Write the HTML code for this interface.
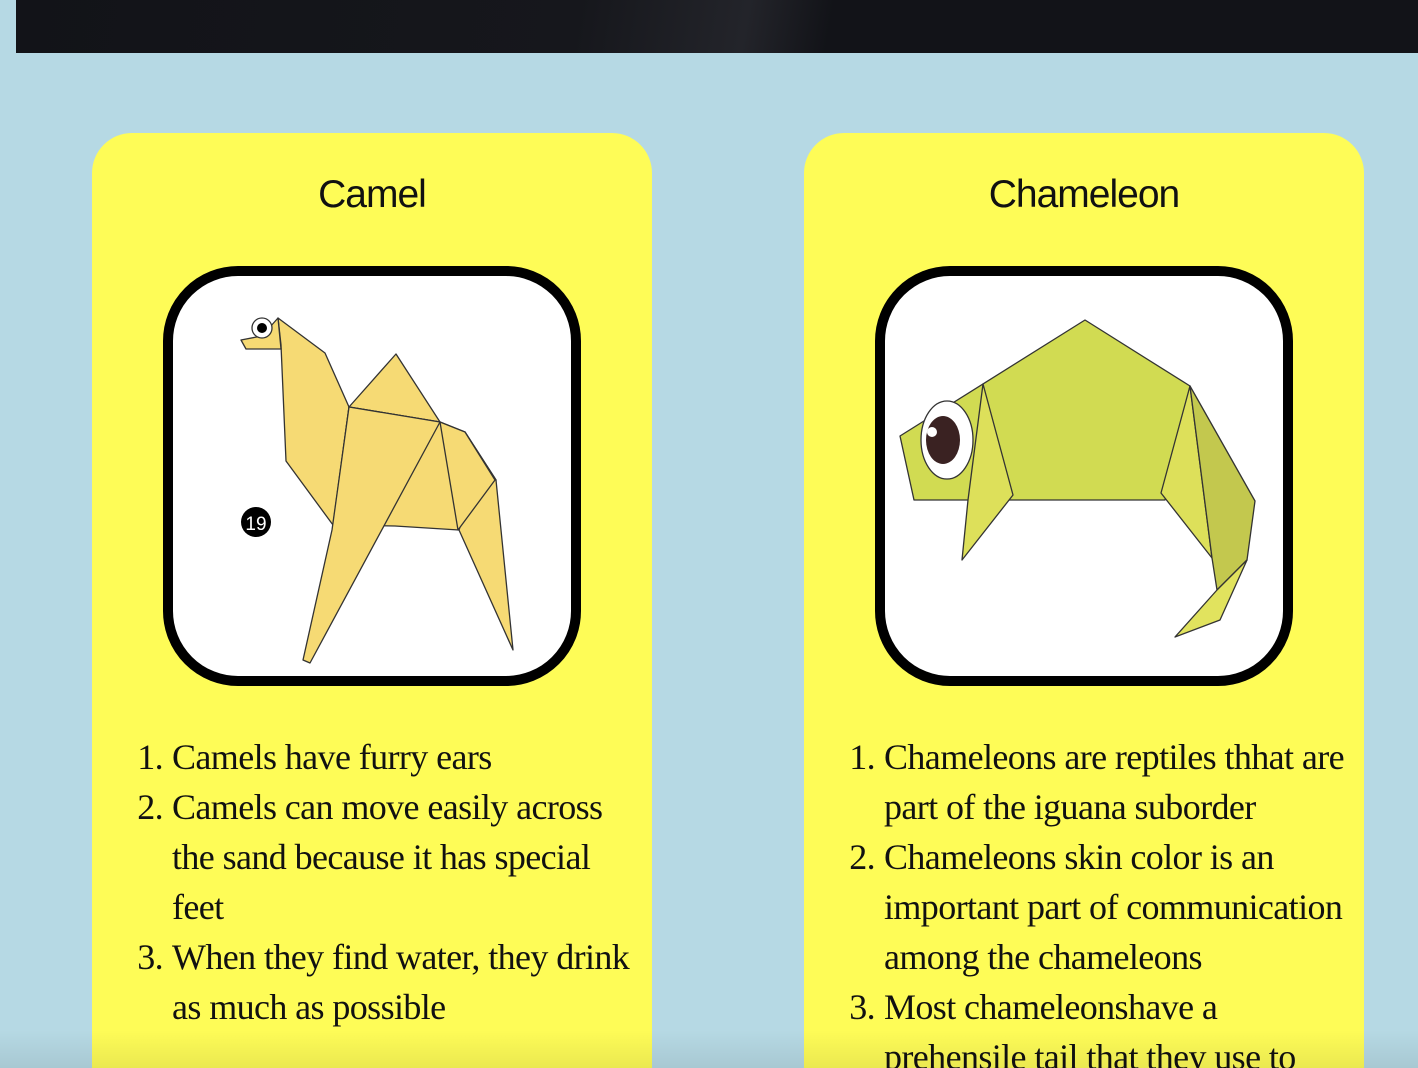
<!DOCTYPE html>
<html style="height:1068px;overflow:hidden"><head><meta charset="utf-8"><style>
html,body{margin:0;padding:0}
body{width:1418px;height:1068px;overflow:hidden;background:#b6d9e4;position:relative;font-family:"Liberation Sans",sans-serif}
.bar{position:absolute;left:16px;top:0;width:1402px;height:53px;background:linear-gradient(100deg,#121318 0%,#16171c 40%,#23242a 52%,#121318 58%,#121318 100%)}
.card{position:absolute;top:133px;width:560px;height:935px;background:#fefc57;border-radius:40px 40px 0 0}
.title{position:absolute;top:37px;width:560px;text-align:center;font-size:39px;line-height:50px;color:#111;font-family:"Liberation Sans",sans-serif;letter-spacing:-1px}
.frame{position:absolute;left:71px;top:133px;width:398px;height:400px;border:10px solid #000;border-radius:75px;background:#fff;box-sizing:content-box}
.ln{position:absolute;font-size:36px;color:#111;white-space:nowrap;line-height:50px;height:50px;font-family:"Liberation Serif",serif;letter-spacing:-0.6px}
.num{text-align:right;width:30px}
.shade{position:absolute;left:0;top:1030px;width:1418px;height:38px;background:linear-gradient(rgba(0,0,0,0),rgba(0,0,0,0.08))}
</style></head><body>
<div class="bar"></div>
<div class="card" style="left:92px"><div class="title">Camel</div><div class="frame"></div></div>
<div class="card" style="left:804px"><div class="title">Chameleon</div><div class="frame"></div></div>
<svg width="1418" height="1068" style="position:absolute;left:0;top:0" stroke="#333" stroke-width="1.3" stroke-linejoin="round">
<g fill="#f6da74">
<polygon points="278,318 325,353 349,407 333,525 286,461 281,345"/>
<polygon points="349,407 396,354 440,422"/>
<polygon points="349,407 440,422 465,432 496,480 459,530 395,526 333,525"/>
<polygon points="465,432 496,480 513,650 459,530 481,465"/>
<polygon points="440,422 458,530 495,480 465,432"/>
<polygon points="349,407 440,422 310,663 303,660 332,530"/>
<polygon points="241,340 262,336 278,318 281,349 246,349"/>
</g>
<circle cx="262" cy="328" r="10" fill="#fff"/><circle cx="262" cy="328" r="5" fill="#000" stroke="none"/>
<circle cx="256" cy="522" r="15" fill="#000" stroke="none"/>
<text x="256" y="530" font-size="19" fill="#fff" stroke="none" text-anchor="middle" font-family="Liberation Sans">19</text>
<polygon points="900,436 1085,320 1190,386 1165,500 914,500" fill="#d1db52"/>
<polygon points="983,384 1013,495 962,560 968,500" fill="#dde05a"/>
<polygon points="1190,386 1161,493 1212,558" fill="#dde05a"/>
<polygon points="1190,386 1255,501 1247,560 1217,590 1212,558" fill="#c3c84e"/>
<polygon points="1247,560 1220,620 1175,637 1217,590" fill="#e1e35e"/>
<ellipse cx="947" cy="440" rx="26" ry="39" fill="#fff"/>
<ellipse cx="943" cy="440" rx="17" ry="24" fill="#3a2222" stroke="none"/>
<circle cx="932" cy="432" r="5" fill="#fff" stroke="none"/>
</svg>
<div class="ln num" style="left:133px;top:732px">1.</div><div class="ln" style="left:172px;top:732px">Camels have furry ears</div>
<div class="ln num" style="left:133px;top:782px">2.</div><div class="ln" style="left:172px;top:782px">Camels can move easily across</div>
<div class="ln" style="left:172px;top:832px">the sand because it has special</div>
<div class="ln" style="left:172px;top:882px">feet</div>
<div class="ln num" style="left:133px;top:932px">3.</div><div class="ln" style="left:172px;top:932px">When they find water, they drink</div>
<div class="ln" style="left:172px;top:982px">as much as possible</div>
<div class="ln num" style="left:845px;top:732px">1.</div><div class="ln" style="left:884px;top:732px">Chameleons are reptiles thhat are</div>
<div class="ln" style="left:884px;top:782px">part of the iguana suborder</div>
<div class="ln num" style="left:845px;top:832px">2.</div><div class="ln" style="left:884px;top:832px">Chameleons skin color is an</div>
<div class="ln" style="left:884px;top:882px">important part of communication</div>
<div class="ln" style="left:884px;top:932px">among the chameleons</div>
<div class="ln num" style="left:845px;top:982px">3.</div><div class="ln" style="left:884px;top:982px">Most chameleonshave a</div>
<div class="ln" style="left:884px;top:1032px;height:36px;overflow:hidden">prehensile tail that they use to</div>
<div class="shade"></div>
</body></html>
